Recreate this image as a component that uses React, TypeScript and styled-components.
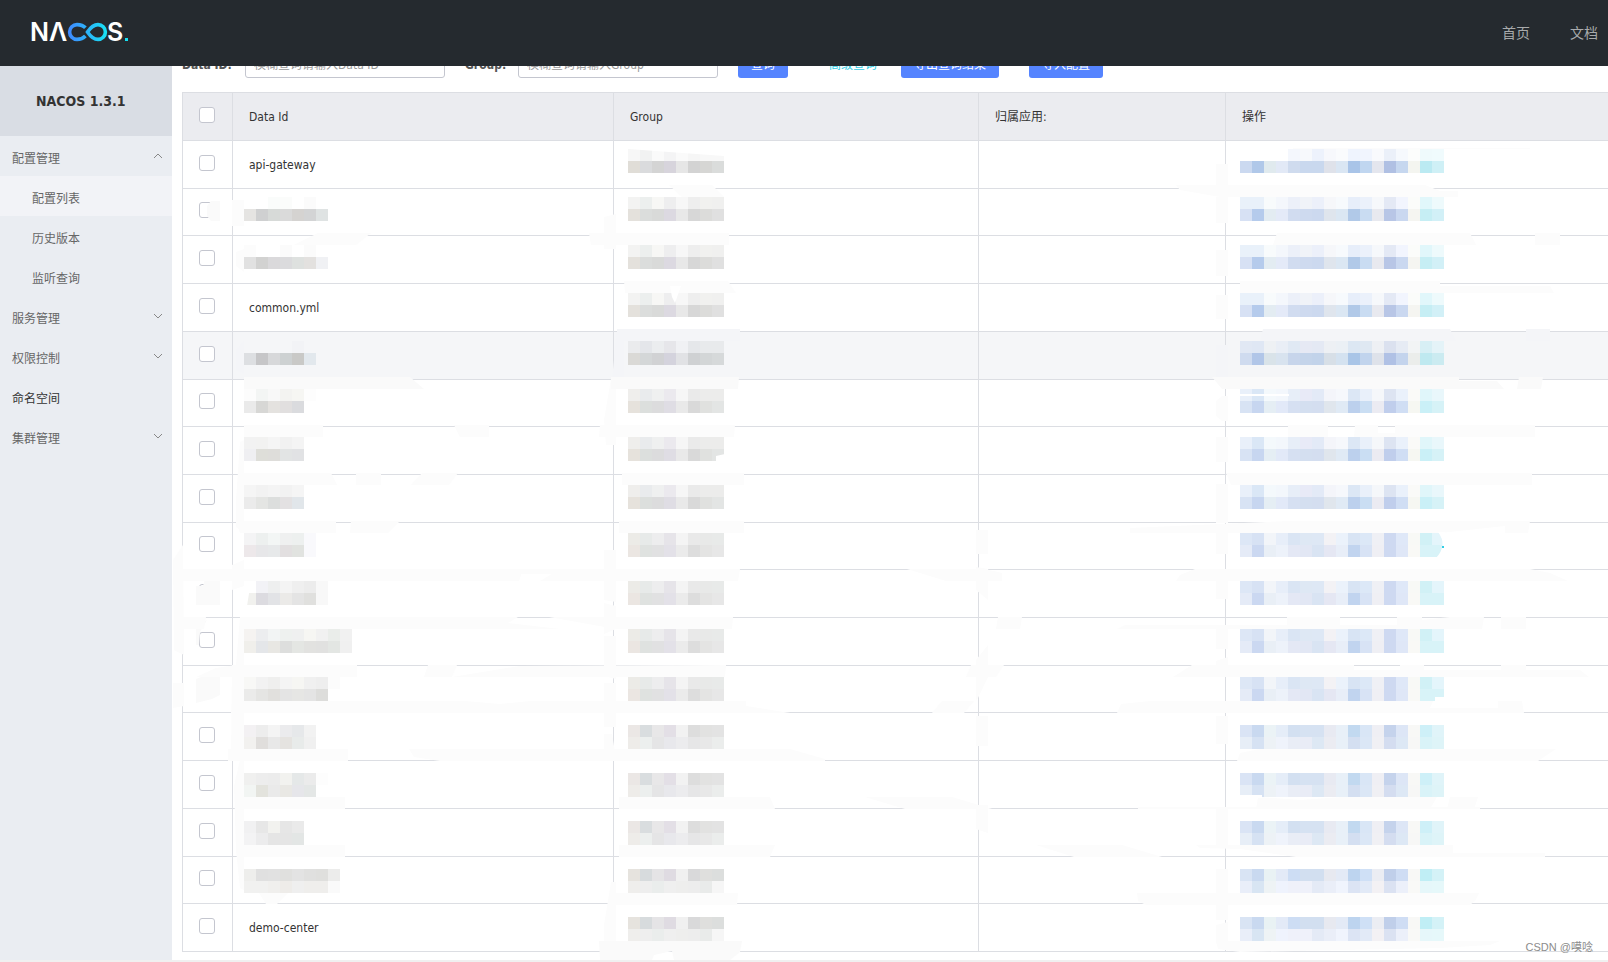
import React from 'react';
import styled, { createGlobalStyle } from 'styled-components';

const GlobalStyle = createGlobalStyle`
  *, *::before, *::after { box-sizing: border-box; }
  body {
    margin: 0;
    background: #fff;
    color: #333;
    font: 12px/20px "DejaVu Sans Condensed", "Noto Sans CJK SC", sans-serif;
  }
  button, input { font: inherit; }
`;

const Page = styled.div`
  display: flex;
  flex-direction: column;
  min-height: 100vh;
  overflow: hidden;
  border-bottom: 2px solid #f0f0f0;
`;

const Header = styled.header`
  position: relative;
  z-index: 2;
  flex: none;
  display: flex;
  align-items: center;
  justify-content: space-between;
  height: 66px;
  padding: 0 10px 0 28px;
  background: #252a2f;
`;

const LogoLink = styled.a`
  display: block;
  height: 40px;
`;

const TopNav = styled.nav`
  display: flex;
  gap: 40px;
`;

const TopLink = styled.a`
  color: #a8aaac;
  font-size: 14px;
  text-decoration: none;
`;

const Body = styled.div`
  display: flex;
  flex: 1;
`;

const Sidebar = styled.aside`
  flex: none;
  width: 172px;
  background: #eaedf2;
`;

const Product = styled.h1`
  margin: 0;
  padding: 0 36px;
  height: 70px;
  background: #d9dde4;
  font-size: 14px;
  line-height: 70px;
  white-space: nowrap;
`;

const Menu = styled.ul`
  margin: 0;
  padding: 0;
  list-style: none;
`;

const MenuLink = styled.a<{ $sub?: boolean; $active?: boolean; $dark?: boolean }>`
  display: flex;
  align-items: center;
  justify-content: space-between;
  height: 40px;
  padding: 6px 9px 0 ${p => (p.$sub ? 32 : 12)}px;
  background: ${p => (p.$active ? '#f2f3f7' : 'transparent')};
  color: ${p => (p.$dark ? '#333' : '#666')};
  text-decoration: none;
`;

const Chevron = styled.svg`
  width: 10px;
  height: 10px;
  margin-bottom: 6px;
`;

const Main = styled.main`
  flex: 1;
  min-width: 0;
  padding: 0 0 8px 10px;
`;

const Filters = styled.form`
  display: flex;
  align-items: center;
  height: 32px;
  margin-top: -20px;
  margin-bottom: 14px;
  white-space: nowrap;
`;

const Field = styled.label<{ $label: number }>`
  display: grid;
  grid-template-columns: ${p => p.$label}px 200px;
  align-items: center;
  height: 32px;
  margin-right: 20px;
  color: #555;
  font-weight: bold;
`;

const LabelText = styled.span`
  padding-top: 6px;
`;

const TextBox = styled.input`
  width: 200px;
  height: 32px;
  padding: 6px 8px 0;
  border: 1px solid #c4c6cf;
  border-radius: 3px;
  color: #333;
  font-weight: normal;
  &::placeholder { color: #999; }
`;

const Button = styled.button`
  height: 32px;
  margin-right: 30px;
  padding: 6px 13px 0;
  border: 0;
  border-radius: 3px;
  background: #5584ff;
  color: #fff;
`;

const AdvancedLink = styled.a`
  margin: 0 24px 0 11px;
  padding-top: 6px;
  color: #33cde5;
  text-decoration: none;
`;

const TableArea = styled.div`
  position: relative;
`;

const Table = styled.table`
  width: 100%;
  table-layout: fixed;
  border-collapse: separate;
  border-spacing: 0;
  border: solid #dcdee3;
  border-width: 1px 0 0 1px;
`;

const Col = styled.col<{ $w?: number }>`
  width: ${p => (p.$w ? `${p.$w}px` : 'auto')};
`;

const Row = styled.tr<{ $short?: boolean; $hover?: boolean }>`
  height: ${p => (p.$short ? 47 : 48)}px;
  background: ${p => (p.$hover ? '#f5f6f8' : '#fff')};
`;

const HeadRow = styled.tr`
  height: 48px;
  background: #ebecf0;
`;

const Th = styled.th`
  padding: 0 16px;
  border: solid #dcdee3;
  border-width: 0 1px 1px 0;
  font-weight: normal;
  text-align: left;
  &:last-child { border-right: 0; }
`;

const Td = styled.td`
  padding: 0 16px;
  border: solid #dcdee3;
  border-width: 0 1px 1px 0;
  &:last-child { border-right: 0; }
`;

const Check = styled.input`
  appearance: none;
  display: block;
  width: 16px;
  height: 16px;
  margin: 0 0 4px;
  border: 1px solid #c4c6cf;
  border-radius: 3px;
  background: #fff;
`;

const Overlay = styled.svg`
  position: absolute;
  top: 0;
  left: 0;
  width: 1426px;
  height: 870px;
  overflow: visible;
  pointer-events: none;
`;

const Watermark = styled.span`
  position: absolute;
  right: 15px;
  bottom: -5px;
  color: #8c8c8c;
  font: 11px/20px "Liberation Sans", "Noto Sans CJK SC", sans-serif;
`;

type Cells = [string, string];

const ACTION_A: Cells = [
  'e9f1fa e9f1fa f8fbfc f4f7fc ecf0f9 f0f3f8 ecf0fa f6f7fa f7fafd e7eefa ebf1fb f6f8fb e4e9f5 f2f5fe fbfcfa e1f7fb eefafc',
  'd7e1f4 b5cbec e3ecf2 e4eaf8 d1dcf0 cedaef ccd9ef dfe5ed dbe7f3 b1c9e8 c9dcf2 e8e9ef b8c6e6 cad8f0 f5f5f1 c6eef4 d2f0f7',
];
const ACTION_FIRST: Cells = [
  '- - - - f4f7fd f7f9fc edf2fc f7f8fc fafbfd eff4fe f1f5fe f9fafd ebf0f9 f6f9fd fcfdfc effafc f0fbfd',
  'cbd9f0 b0c8e9 e0eaee e2e9f6 cfdbee c9d8ee c9d8ee dfe2ea dae6f3 a9c4e8 c0d6f0 e4e6ee b0c0e3 c6d7ef f4f5f0 bbeaf2 cff0f6',
];
const ACTION_HOVER: Cells = [
  'e1e8f4 dfe7f4 eef1f4 e9eef6 e0e9f4 e6e9f4 e4e9f4 edf0f4 ebf0f5 dce7f3 dfe8f2 eef0f4 dbe1ef e6ebf4 f2f4f5 d7eff5 e4f3f8',
  'cfdbef b1c6e8 d9e3e9 d8e3ef c7d5eb c4d4ea c2d3ea d7dfe7 d4e2f0 a9c5e7 c1d4ed dee2ea b0c1e5 c4d4ed ebedeb bfe9f0 cbebf1',
];
const ACTION_B: Cells = [
  'e9f0fa dae7f6 f4f9fc f3f7fc e7eef8 e8eaf7 e3eaf7 f4f5fa f6f8fc dce7f5 e9f0fa f5f7fa dde4f2 eaf1fb fafaf8 e0f6fa e9f7fb',
  'd8e3f4 c7d6f0 e5eef4 e2e9f8 d6e0f2 d4dff0 d4def0 e0e6ed e0eaf5 bcd0ed cadef3 ebebf2 c0ceec d0def4 f6f7f2 caf0f7 d6f2f7',
];
const ACTION_C: Cells = [
  'dde7f6 d7e2f4 f2f5f9 e7eef9 dae5f4 dee8f4 dee8f5 f3f2f5 ebf2fb d8e4f4 dce8f7 eff0f5 ced9f1 dfe8f8 f8f9f6 d1f1f6 e4f5fb',
  'e5ebf7 cbd8f1 e9eff6 edf2fa e4e8f5 e2e7f4 d9e4f3 e5e7f3 e8eef8 c1d4ef d8e3f5 efeff4 ced9f1 dfe7f7 f9f9f6 d8f3f8 d8f3f8',
];
const ACTION_D: Cells = [
  'dae4f5 c9d9f0 ebf3f6 e5edf8 d3e0f1 d6e2f2 d6e2f2 e8eaf2 e8f0f8 c2d9f0 d9e6f6 efeff4 c5d3ec dde6f6 f8f8f6 cef0f8 e0f4f9',
  'e7eef7 d6e2f3 edf2f6 eff3fb e9edf6 e9ecf6 dde8f4 ebecf2 e8f0f8 d4dff1 dbe7f6 f0f0f4 d4ddf0 dde8f5 f7f7f6 d9f3f8 def4f8',
];
const ACTION_E: Cells = [
  'd9e4f4 c9d9f0 e9f2f4 e3eaf7 cdddf4 d2dff0 d2dff0 e7e9f0 e3eaf6 bdd4ef cfe0f6 ebedf3 c0cfea cfddf4 f8f8f6 c0eef5 d4f2f7',
  'e9eef9 d8e5f3 eef3f5 eff3fd eff1fa eff1fa e4eaf6 eaeef8 f0f4fd dce4f4 e2eaf7 f3f1f4 dbe2f2 ecf0fa f9f9f7 e6f7fa e6f8fa',
];
const GROUP_A: Cells = [
  'f3f3f2 ecefee f7f7f5 eeeeef f7f7f7 eeeeee f1f1ef f0f0ef',
  'e4e1dc dbdddc d9dad9 dcd9e1 e8e8e8 d7d7d7 dcdcda e0e0e0',
];
const GROUP_FIRST: Cells = [
  'f7f7f7 f1f2f2 fafafa f4f4f5 fafafa f6f6f6 f8f8f8 f8f8f8',
  'e0ddd7 dadbdd d4d4d4 d7d4dc e6e6e6 d3d3d3 d6d6d4 dadcdb',
];
const GROUP_HOVER: Cells = [
  'eaebed e4e6ea ebedef e6e6ea f0f1f4 e5e7ea e8eaec e8eaec',
  'dad9d6 d4d7d8 d1d2d4 d4d3dd e1e2e5 cfd1d3 d3d6d7 d6d9da',
];
const GROUP_B: Cells = [
  'efeeec e9ebed eff0f0 ebe9ee f6f6f6 eaeaea ececeb ececeb',
  'e6e2dc dcdfdd dcdcdd dfdde4 e9e9e9 d9d9d9 e0e1df e3e5e4',
];
const GROUP_C: Cells = [
  'ecebe7 e7eae9 ededee e6e4e9 f4f4f4 e9e9e9 e8e9e8 e8eae9',
  'ebe6e2 dfe2e0 e1e1e2 e3e1e8 ebebeb dddddd e4e4e3 e7e7e7',
];
const GROUP_D: Cells = [
  'ebe7e5 d9dddf e8e7e8 e3dfe6 f2f2f2 dddddd e2e2e1 e3e3e3',
  'eeece9 ecefee e5e5e6 e8e8ec ececee e6e6e7 e8e8e8 ebedec',
];
const GROUP_E: Cells = [
  'e6e3de d7dbdd e5e4e6 dfdbe2 f0f0f0 d9d9da dfdfdd dcdedd',
  'efeeec eeeeee eaedec efefef eeeeed ededed e9ebea f6f6f6',
];

interface Config {
  id?: string;
  short?: boolean;
  hover?: boolean;
  name?: Cells;
  group: Cells;
  action: Cells;
}

const ROWS: Config[] = [
  { id: 'api-gateway', group: GROUP_FIRST, action: ACTION_FIRST },
  { short: true, group: GROUP_A, action: ACTION_A, name: ['- - fafcfb fbfcfb - fbfbfb', 'e5e4e2 cfd0d1 d7dad8 dadada d5d3d1 d3d4d5 dfe3e3'] },
  { group: GROUP_A, action: ACTION_A, name: ['fcfcfc - - fbfbfb - fbfbfb', 'e1e1e1 d2d2d1 dad9db dbdbdd dee1df e3e1df f0f1f4'] },
  { id: 'common.yml', group: GROUP_A, action: ACTION_A },
  { hover: true, group: GROUP_HOVER, action: ACTION_HOVER, name: ['- - - - f2f3f6', 'dddfe2 c6c6c8 d7d8da cdd1d2 c9c9c7 e2e8ed'] },
  { short: true, group: GROUP_B, action: ACTION_B, name: ['fcfcfc f3f5f4 f8f8f8 f3f3f1 f6f6f3 fdfdfd', 'eaeaea d7d7d5 e4e2df e1dfdf dadbde'] },
  { group: GROUP_B, action: ACTION_B, name: ['f2f2f2 f2f2f1 f5f5f5 f1f1f1 f4f4f4', 'efeff2 deded9 deddda e2e4e4 e1e2e4'] },
  { group: GROUP_B, action: ACTION_B, name: ['f5f5f5 f2f2f2 f4f4f4 f2f2f2 f5f5f5', 'ebebeb e4e5e3 dcdedd e3e1e2 e1e6ea'] },
  { short: true, group: GROUP_C, action: ACTION_C, name: ['f4f4f5 edf0ef f3f6f5 eff0f0 edf0ef f9f9fc', 'ede8ea e7e7e9 e7e9ea e2dfe0 e1e3e0 f9f9fc'] },
  { group: GROUP_C, action: ACTION_C, name: ['- f2f2f6 eeefef f4f4f4 efefef ececec f8f8f8', 'f1f1ee dcdbe0 e2e3e6 ebeae8 e4e4e4 e0e0de f8f8f8'] },
  { group: GROUP_C, action: ACTION_C, name: ['f5f3f1 ecedef f2f4f4 eef1ef eff0f0 f6f6f3 f1f1f1 eaedea f1f1f1', 'f0efeb e4e6e9 e8e7e3 dddedd e4e6e3 e2e2e0 e1e1e0 e3e6e3 f0f0f0'] },
  { short: true, group: GROUP_C, action: ACTION_C, name: ['f8f8f6 f2f2f2 efefee f4f4f4 f6f6f3 f0f0f0 eeeeee fcfcfc', 'ebebea e5e5e3 e1e0dd e4e4e4 e6e6e4 e4e4e4 dddddb'] },
  { group: GROUP_D, action: ACTION_D, name: ['f3f1f3 ededed f4f4f4 ebebed e6e8ea f2f2f2', 'f2f1ef e0dedc e8e8e8 e5e3e0 e8ebea f0f0f0'] },
  { group: GROUP_D, action: ACTION_D, name: ['f0f0ef ededed ececec f2f2ef e5e8e8 ebebeb fdfdfd', 'f2f5f3 e3e3dd eaeaea e9e8e4 e6e6ea e4e7e6'] },
  { group: GROUP_D, action: ACTION_D, name: ['f1f1f2 e7e7e7 f2f2ef e6e6e6 eaeaea', 'f3f3f4 ececed e5e5e5 e5e5e5 e3e6e5'] },
  { short: true, group: GROUP_E, action: ACTION_E, name: ['eeeeec e0e0e0 e1e1e1 e0e0de e3e3e3 e0e0df dfdfdd ececeb', 'f1f1f0 f1f1f0 f0efed eeece9 efefef efeeec efeeec fafafa'] },
  { id: 'demo-center', group: GROUP_E, action: ACTION_E },
];

/* Brush strokes that hide parts of the table: [polygon points, fill]. */
const WHITE = '#fff';
const HAZE = '#fcfcfc';
const TINT = '#f4f5f8';
const STROKES: [string, string?][] = [
  /* cleared checkboxes */
  ['207,206 211,201 220,201 220,221 211,221 207,216', '#fafafa'],
  ['196,586 203,586 207,572 220,569 220,605 196,605', '#fafafa'],
  ['196,625 207,620 200,632 199,645 196,645', '#fafafa'],
  ['196,679 206,675 220,675 220,695 212,699 196,703', '#fafafa'],
  /* left edge */
  ['173,560 183,545 184,655 174,650'],
  ['173,683 184,683 184,706 173,708'],
  /* between check and name columns */
  ['232,200 244,200 244,226 232,226'],
  ['236,252 244,249 244,272 236,266'],
  ['236,350 244,340 244,374 236,370', TINT],
  ['240,442 244,440 244,533 236,527 236,500'],
  ['232,565 244,560 244,586 232,590'],
  ['240,617 244,617 244,665 236,665'],
  ['232,665 244,665 244,761 231,761'],
  ['234,786 240,760 244,760 244,890 240,888 236,850'],
  /* between name and group columns */
  ['604,217 616,214 616,249 604,249'],
  ['616,333 624,333 624,379 612,379 614,360', TINT],
  ['611,379 616,379 616,445 606,445 604,420'],
  ['604,550 616,550 616,602 604,600'],
  ['604,603 616,606 616,629 604,634'],
  ['604,636 616,636 616,679 604,676'],
  ['604,683 616,683 616,727 604,727'],
  ['604,734 612,734 616,758 604,758'],
  ['611,882 616,882 616,954 604,954 604,925'],
  /* between group and application columns */
  ['976,530 988,530 988,554 976,554'],
  ['976,567 988,569 988,600 976,590'],
  ['988,645 988,677 978,698 976,700 976,660'],
  ['976,716 988,716 988,746 976,746'],
  ['976,805 988,805 988,833 976,829'],
  /* between application and action columns */
  ['1216,164 1228,164 1228,196 1216,196'],
  ['1216,197 1228,197 1228,223 1216,223'],
  ['1216,250 1228,250 1228,276 1216,276'],
  ['1216,295 1228,295 1228,319 1216,319'],
  ['1216,345 1228,345 1228,378 1216,378', TINT],
  ['1216,401 1222,396 1228,396 1228,421 1222,421 1216,416'],
  ['1216,437 1228,437 1228,462 1216,462'],
  ['1216,484 1228,484 1228,523 1216,523'],
  ['1216,524 1228,524 1228,554 1216,554'],
  ['1216,569 1228,569 1228,599 1216,599'],
  ['1216,625 1228,625 1228,649 1216,649'],
  ['1216,661 1228,657 1228,677 1216,677'],
  ['1216,716 1228,716 1228,744 1216,744'],
  ['1216,807 1228,807 1228,848 1216,848'],
  ['1216,869 1228,869 1228,920 1216,920'],
  ['1216,925 1228,922 1228,951 1216,943'],
  /* name column bands */
  ['294,245 318,233 371,233 356,245'],
  ['244,377 410,377 424,389 244,389', '#fafafa'],
  ['244,425 323,425 323,437 244,437'],
  ['454,425 489,425 489,437 460,437'],
  ['240,473 331,473 337,485 238,485'],
  ['356,473 381,473 381,485 356,485'],
  ['422,473 458,473 449,485 411,485'],
  ['236,521 336,521 336,533 240,533'],
  ['351,521 400,521 388,533 350,533'],
  ['213,569 523,569 519,581 182,581 182,569'],
  ['182,617 206,617 204,629 182,629'],
  ['244,617 518,617 508,623 560,629 244,629'],
  ['236,665 357,665 357,677 196,677 216,668'],
  ['428,665 457,665 452,677 424,677'],
  ['232,701 465,701 500,704 530,701 746,701 746,706 790,713 231,713'],
  ['228,749 348,749 348,761 228,761'],
  ['409,749 790,749 825,759 825,761 440,761 414,757'],
  ['238,797 345,797 345,809 238,809'],
  ['238,845 345,845 345,857 238,857'],
  ['259,893 288,893 277,904 266,904'],
  /* group column bands */
  ['669,185 712,185 724,197 682,197'],
  ['589,233 729,233 729,245 591,245'],
  ['624,281 728,281 736,293 625,293'],
  ['617,329 740,329 740,341 617,341', TINT],
  ['611,377 739,377 738,389 611,389', '#fafafa'],
  ['600,425 735,425 734,437 599,437'],
  ['622,473 744,473 744,485 622,485'],
  ['619,521 744,521 744,533 619,533'],
  ['521,569 740,569 738,581 540,581 552,574 521,574'],
  ['549,617 733,617 732,629 616,629'],
  ['520,666 726,665 725,677 452,677'],
  ['619,797 770,797 775,809 619,809'],
  ['619,845 775,845 770,857 619,857'],
  ['611,893 738,893 737,905 610,905'],
  ['599,941 742,941 740,952 730,960 674,960 672,951 654,955 652,960 600,960', '#fafafa'],
  /* application and action column bands */
  ['907,569 985,569 1002,573 1002,581 946,581'],
  ['998,617 1022,617 1020,629 996,629'],
  ['971,665 1004,665 996,677 966,677'],
  ['942,701 974,701 964,713 932,713'],
  ['865,797 952,797 992,809 905,809'],
  ['1036,845 1122,845 1162,857 1074,857'],
  ['1293,148 1530,148 1530,149 1293,149'],
  ['1176,185 1425,185 1440,191 1458,191 1458,197 1220,197 1180,190'],
  ['1277,233 1470,233 1476,245 1273,245'],
  ['1535,233 1560,233 1560,245 1535,245'],
  ['1240,281 1440,281 1440,286 1550,286 1554,293 1240,293'],
  ['1263,329 1450,329 1456,341 1260,341', TINT],
  ['1526,329 1550,329 1550,341 1526,341', TINT],
  ['1212,377 1459,377 1459,381 1497,381 1504,389 1222,389', '#fafafa'],
  ['1519,377 1543,377 1541,389 1517,389', '#fafafa'],
  ['1288,425 1328,425 1328,437 1288,437'],
  ['1355,425 1378,425 1378,433 1395,433 1395,425 1535,425 1535,437 1354,437'],
  ['1226,473 1532,473 1532,485 1231,485'],
  ['1130,528 1288,521 1530,521 1528,533 1505,533 1505,526 1440,533 1130,533'],
  ['1180,575 1195,569 1530,569 1550,573 1568,581 1176,581'],
  ['1287,617 1340,617 1340,625 1397,625 1397,617 1422,617 1422,620 1450,617 1484,617 1482,629 1117,629 1125,625 1287,625'],
  ['1501,617 1526,617 1526,629 1501,629'],
  ['1192,665 1354,665 1354,670 1400,670 1400,665 1424,665 1424,670 1501,670 1501,665 1526,665 1526,670 1580,670 1589,677 1173,677'],
  ['1117,713 1121,704 1150,701 1433,701 1430,708 1498,708 1498,701 1522,701 1524,713'],
  ['1237,761 1240,753 1260,749 1556,749 1538,761'],
  ['1256,809 1258,797 1300,800 1357,796 1437,797 1430,809'],
  ['1450,797 1478,797 1474,809 1447,809'],
  ['1138,807 1480,807 1480,809 1138,809'],
  ['1196,845 1453,845 1453,853 1545,853 1545,857 1296,857 1240,849 1200,848'],
  ['1137,893 1479,893 1475,901 1470,905 1146,905 1138,901'],
  ['1216,941 1500,941 1490,945 1440,948 1240,952 1218,949'],
];

function Mosaic({ x, y, cells }: { x: number; y: number; cells: Cells }) {
  return (
    <g shapeRendering="crispEdges">
      {cells.map((line, r) =>
        line.split(' ').map((c, i) =>
          c === '-' ? null : (
            <rect key={`${r}-${i}`} x={x + i * 12} y={y + r * 12} width={12} height={12} fill={`#${c}`} />
          ),
        ),
      )}
    </g>
  );
}

function Redaction() {
  return (
    <Overlay viewBox="182 92 1426 870" aria-hidden="true">
      {STROKES.map(([points, fill], i) => (
        <polygon key={i} points={points} fill={fill ?? HAZE} />
      ))}
      {ROWS.map((row, i) => {
        const y = 149 + i * 48;
        return (
          <g key={i}>
            {row.name && <Mosaic x={244} y={y} cells={row.name} />}
            <Mosaic x={628} y={y} cells={row.group} />
            <Mosaic x={1240} y={y} cells={row.action} />
          </g>
        );
      })}
      <polygon points="628,149 724,156 724,148 628,148" fill={WHITE} />
      <polygon points="670,286 681,286 675,303 672,297" fill={WHITE} />
      <polygon points="716,456 725,454 725,462 716,462" fill={WHITE} />
      <polygon points="244,581 251,581 247,606 243,606" fill={WHITE} />
      <polygon points="1240,394 1289,394 1289,396 1240,396" fill={WHITE} />
      <path d="M1438 532h7v26h-9q12-13 2-26z" fill={WHITE} />
      <rect x={1442} y={546} width={2} height={2} fill="#33cde5" />
      <polygon points="1435,701 1435,697 1445,697 1445,703" fill={WHITE} />
      <polygon points="1240,795 1262,795 1262,798 1240,798" fill={WHITE} />
    </Overlay>
  );
}

function Logo() {
  return (
    <svg width="104" height="40" viewBox="0 0 104 40" role="img" aria-label="NACOS">
      <defs>
        <linearGradient id="loop" gradientUnits="userSpaceOnUse" x1="40" y1="0" x2="80" y2="0">
          <stop offset="0" stopColor="#4088ff" />
          <stop offset="1" stopColor="#16e4f4" />
        </linearGradient>
      </defs>
      <g fill="#fff" fontFamily="Inter, sans-serif" fontSize="25" fontWeight="600">
        <text x="2" y="28">N</text>
        <text x="21" y="28">Λ</text>
        <text x="79" y="28">S</text>
      </g>
      <g fill="none" stroke="url(#loop)" strokeWidth="3.6">
        <path d="M57.4 14.8C55 12.100 52 11.600 49 11.600A7.400 7.400 0 0 0 49 26.400C52 26.400 55 25.600 57.400 23" />
        <path d="M59.500 19C62.500 14.500 65.500 11.600 70 11.600A7.400 7.400 0 0 1 70 26.400C65.500 26.400 62.500 23.500 59.500 19z" />
      </g>
      <rect x="97" y="25" width="3" height="3" fill="#18dff0" />
    </svg>
  );
}

const MENU = [
  { text: '配置管理', arrow: 'up' },
  { text: '配置列表', sub: true, active: true },
  { text: '历史版本', sub: true },
  { text: '监听查询', sub: true },
  { text: '服务管理', arrow: 'down' },
  { text: '权限控制', arrow: 'down' },
  { text: '命名空间', dark: true },
  { text: '集群管理', arrow: 'down' },
];

export default function App() {
  return (
    <>
      <GlobalStyle />
      <Page>
        <Header>
          <LogoLink href="#home"><Logo /></LogoLink>
          <TopNav>
            <TopLink href="#home">首页</TopLink>
            <TopLink href="#docs">文档</TopLink>
          </TopNav>
        </Header>
        <Body>
          <Sidebar>
            <Product>NACOS 1.3.1</Product>
            <Menu>
              {MENU.map(m => (
                <li key={m.text}>
                  <MenuLink href="#menu" $sub={m.sub} $active={m.active} $dark={m.dark}>
                    {m.text}
                    {m.arrow && (
                      <Chevron viewBox="0 0 10 10" fill="none" stroke="#888">
                        <path d={m.arrow === 'up' ? 'M1 7l4-4 4 4' : 'M1 3l4 4 4-4'} />
                      </Chevron>
                    )}
                  </MenuLink>
                </li>
              ))}
            </Menu>
          </Sidebar>
          <Main>
            <Filters>
              <Field $label={63}>
                <LabelText>Data ID:</LabelText>
                <TextBox placeholder="模糊查询请输入Data ID" />
              </Field>
              <Field $label={53}>
                <LabelText>Group:</LabelText>
                <TextBox placeholder="模糊查询请输入Group" />
              </Field>
              <Button type="button">查询</Button>
              <AdvancedLink href="#advanced">高级查询</AdvancedLink>
              <Button type="button">导出查询结果</Button>
              <Button type="button">导入配置</Button>
            </Filters>
            <TableArea>
              <Table>
                <colgroup>
                  <Col $w={50} />
                  <Col $w={381} />
                  <Col $w={365} />
                  <Col $w={247} />
                  <Col />
                </colgroup>
                <thead>
                  <HeadRow>
                    <Th><Check type="checkbox" aria-label="全选" /></Th>
                    <Th>Data Id</Th>
                    <Th>Group</Th>
                    <Th>归属应用:</Th>
                    <Th>操作</Th>
                  </HeadRow>
                </thead>
                <tbody>
                  {ROWS.map((row, i) => (
                    <Row key={i} $short={row.short} $hover={row.hover}>
                      <Td><Check type="checkbox" aria-label={row.id ?? `${i + 1}`} /></Td>
                      <Td>{row.id}</Td>
                      <Td />
                      <Td />
                      <Td />
                    </Row>
                  ))}
                </tbody>
              </Table>
              <Redaction />
              <Watermark>CSDN @嗼唸</Watermark>
            </TableArea>
          </Main>
        </Body>
      </Page>
    </>
  );
}
